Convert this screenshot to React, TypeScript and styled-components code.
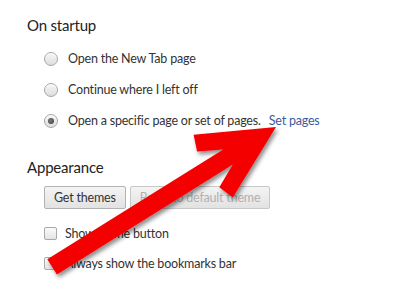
import React from "react";
import styled, { createGlobalStyle } from "styled-components";

const Global = createGlobalStyle`
  html, body { margin: 0; padding: 0; background: #ffffff; }
  body { font-family: Lato, "Noto Sans", sans-serif; color: #303030; }
`;

const Page = styled.div`
  position: relative;
  width: 400px;
  height: 300px;
  overflow: hidden;
  padding: 14px 0 0 27px;
  box-sizing: border-box;
  background: #ffffff;
`;

const Heading = styled.div<{ $gap?: number }>`
  height: 22px;
  line-height: 22px;
  font-size: 15px;
  letter-spacing: -0.2px;
  color: #222222;
  margin-top: ${(p) => p.$gap ?? 0}px;
`;

const List = styled.div<{ $top: number }>`
  display: flex;
  flex-direction: column;
  padding-left: 17px;
  margin-top: ${(p) => p.$top}px;
`;

const Row = styled.div<{ $h: number; $gap: number }>`
  display: flex;
  align-items: center;
  height: ${(p) => p.$h}px;
  gap: ${(p) => p.$gap}px;
  font-size: 12.5px;
  letter-spacing: -0.2px;
  color: #333333;
  white-space: nowrap;
`;

const Radio = styled.span<{ $on?: boolean }>`
  width: 14px;
  height: 14px;
  box-sizing: border-box;
  border-radius: 50%;
  border: 1px solid #a6a6a6;
  background: linear-gradient(#f6f6f6, #dedede);
  box-shadow: inset 0 1px 0 #ffffff;
  display: flex;
  align-items: center;
  justify-content: center;
  flex: none;
  &::after {
    content: "";
    display: ${(p) => (p.$on ? "block" : "none")};
    width: 6px;
    height: 6px;
    border-radius: 50%;
    background: radial-gradient(circle at 40% 40%, #7a7a7a, #3a3a3a);
  }
`;

const Check = styled.span`
  width: 13px;
  height: 13px;
  box-sizing: border-box;
  border: 1px solid #a9a9a9;
  border-radius: 2px;
  background: linear-gradient(#fbfbfb, #e4e4e4);
  flex: none;
`;

const Link = styled.span`
  color: #3b5a9e;
  margin-left: 8px;
`;

const Buttons = styled.div`
  display: flex;
  gap: 4px;
  padding-left: 17px;
  margin-top: 8px;
`;

const Button = styled.div<{ $disabled?: boolean }>`
  height: 23px;
  box-sizing: border-box;
  padding: 0 9px;
  display: flex;
  align-items: center;
  font-size: 12.5px;
  letter-spacing: -0.2px;
  border: 1px solid ${(p) => (p.$disabled ? "#c8c8c8" : "#b3b3b3")};
  border-radius: 2px;
  background: linear-gradient(#f4f4f4, #e2e2e2);
  color: ${(p) => (p.$disabled ? "#b0b0b0" : "#333333")};
  white-space: nowrap;
`;

const Overlay = styled.svg`
  position: absolute;
  left: 0;
  top: 0;
  pointer-events: none;
`;

const arrowPoints =
  "276,127 232.8,197.6 219.3,187.2 232.8,164.6 56.9,274.5 47.3,259.3 223.2,149.4 197.1,151.6 193.6,134.8";

export default function App() {
  return (
    <>
      <Global />
      <Page>
        <Heading>On startup</Heading>
        <List $top={7}>
          <Row $h={31} $gap={10}>
            <Radio />
            <span>Open the New Tab page</span>
          </Row>
          <Row $h={31} $gap={10}>
            <Radio />
            <span>Continue where I left off</span>
          </Row>
          <Row $h={31} $gap={10}>
            <Radio $on />
            <span>
              Open a specific page or set of pages.
              <Link>Set pages</Link>
            </span>
          </Row>
        </List>
        <Heading $gap={20}>Appearance</Heading>
        <Buttons>
          <Button>Get themes</Button>
          <Button $disabled>Reset to default theme</Button>
        </Buttons>
        <List $top={9}>
          <Row $h={30} $gap={8}>
            <Check />
            <span>Show Home button</span>
          </Row>
          <Row $h={30} $gap={8}>
            <Check />
            <span>Always show the bookmarks bar</span>
          </Row>
        </List>
        <Overlay width="400" height="300" viewBox="0 0 400 300">
          <defs>
            <filter id="shadow" x="-20%" y="-20%" width="140%" height="140%">
              <feDropShadow dx="2" dy="3" stdDeviation="2" floodColor="#000" floodOpacity="0.45" />
            </filter>
          </defs>
          <polygon points={arrowPoints} fill="#f40000" filter="url(#shadow)" />
        </Overlay>
      </Page>
    </>
  );
}
